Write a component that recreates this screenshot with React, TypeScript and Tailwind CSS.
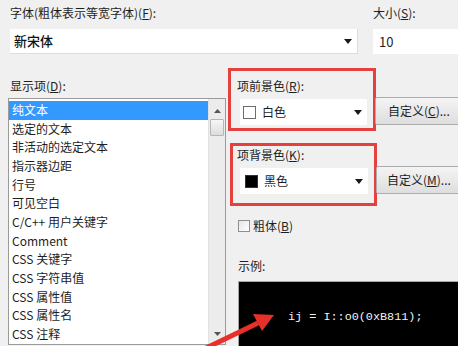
import React from "react";

const Arrow = ({ className = "" }: { className?: string }) => (
  <svg width="8" height="5" viewBox="0 0 8 5" className={className}>
    <polygon points="0,0 8,0 4,5" fill="#1a1a1a" />
  </svg>
);

const items = [
  "纯文本",
  "选定的文本",
  "非活动的选定文本",
  "指示器边距",
  "行号",
  "可见空白",
  "C/C++ 用户关键字",
  "Comment",
  "CSS 关键字",
  "CSS 字符串值",
  "CSS 属性值",
  "CSS 属性名",
  "CSS 注释",
];

export default function App() {
  return (
    <div
      className="relative w-[458px] h-[346px] overflow-hidden bg-[#f0f0f0] text-[12px] text-[#1e1e1e]"
      style={{ fontFamily: '"Noto Sans CJK SC", "Noto Sans", sans-serif' }}
    >
      {/* Top row */}
      <div className="flex pl-[10px] pt-[4px]">
        <div className="flex flex-col w-[348px] shrink-0">
          <div className="h-[18px] leading-[18px]">
            字体(粗体表示等宽字体)(<span className="underline">F</span>):
          </div>
          <div className="mt-[7px] h-[25px] bg-white border-b border-r border-[#dcdcdc] flex items-center justify-between pl-[4px] pr-[5px]">
            <span className="text-[13px] font-medium text-[#111]">新宋体</span>
            <Arrow />
          </div>
        </div>
        <div className="flex flex-col ml-[15px] w-[100px] shrink-0">
          <div className="h-[18px] leading-[18px]">
            大小(<span className="underline">S</span>):
          </div>
          <div className="mt-[7px] h-[25px] bg-white flex items-center pl-[6px] text-[13px]">
            10
          </div>
        </div>
      </div>

      {/* Bottom section */}
      <div className="flex mt-[14px]">
        {/* Left column */}
        <div className="flex flex-col w-[228px] shrink-0 pl-[8px]">
          <div className="pt-[9px] h-[27px] leading-[18px] pl-[2px]">
            显示项(<span className="underline">D</span>):
          </div>
          <div className="mt-[3px] w-[218px] h-[247px] border border-[#9a9a9a] bg-white flex overflow-hidden">
            <div className="flex-1 pt-[2px] overflow-hidden">
              {items.map((t, i) => (
                <div
                  key={t}
                  className={
                    "h-[18.67px] leading-[18.67px] pl-[3px] whitespace-nowrap " +
                    (i === 0 ? "bg-[#3399ff] text-white" : "")
                  }
                >
                  {t}
                </div>
              ))}
            </div>
            <div className="w-[17px] bg-[#ececec] border-l border-[#e2e2e2] flex flex-col items-center">
              <svg width="7" height="4" viewBox="0 0 7 4" className="mt-[10px]">
                <polygon points="0,4 7,4 3.5,0" fill="#555" />
              </svg>
              <div className="mt-[6px] w-[14px] h-[17px] bg-gradient-to-b from-[#f7f7f7] to-[#dcdcdc] border border-[#b5b5b5] rounded-[1px]" />
              <svg width="7" height="4" viewBox="0 0 7 4" className="mt-[196px]">
                <polygon points="0,0 7,0 3.5,4" fill="#555" />
              </svg>
            </div>
          </div>
        </div>

        {/* Right column */}
        <div className="flex flex-col w-[240px] shrink-0">
          {/* Foreground */}
          <div className="flex items-start">
            <div className="w-[148px] h-[63px] border-[3px] border-[#e4403d] flex flex-col shrink-0">
              <div className="pt-[6px] h-[24px] leading-[18px] pl-[6px]">
                项前景色(<span className="underline">R</span>):
              </div>
              <div className="mt-[4px] ml-[9px] w-[127px] h-[26px] bg-white flex items-center pl-[3px] pr-[5px]">
                <div className="w-[13px] h-[13px] bg-white border border-[#6d6d6d]" />
                <span className="ml-[6px] flex-1">白色</span>
                <Arrow />
              </div>
            </div>
            <div className="-ml-[1px] mt-[29px] w-[90px] h-[28px] border border-[#acacac] rounded-[2px] bg-gradient-to-b from-[#f4f4f4] to-[#dedede] flex items-center pl-[12px] whitespace-nowrap">
              自定义(<span className="underline">C</span>)...
            </div>
          </div>

          {/* Background */}
          <div className="flex items-start mt-[12px] pl-[2px]">
            <div className="w-[147px] h-[63px] border-[3px] border-[#e4403d] flex flex-col shrink-0">
              <div className="pt-[0px] h-[22px] leading-[18px] pl-[4px]">
                项背景色(<span className="underline">K</span>):
              </div>
              <div className="mt-[0px] ml-[7px] w-[128px] h-[26px] bg-white flex items-center pl-[5px] pr-[5px]">
                <div className="w-[13px] h-[13px] bg-black border border-[#333]" />
                <span className="ml-[6px] flex-1">黑色</span>
                <Arrow />
              </div>
            </div>
            <div className="-ml-[1px] mt-[23px] w-[90px] h-[28px] border border-[#acacac] rounded-[2px] bg-gradient-to-b from-[#f4f4f4] to-[#dedede] flex items-center pl-[10px] whitespace-nowrap">
              自定义(<span className="underline">M</span>)...
            </div>
          </div>

          {/* Bold checkbox */}
          <div className="flex items-center mt-[12px] pl-[10px] h-[16px]">
            <div className="w-[12px] h-[12px] border border-[#8f8f8f] bg-gradient-to-br from-[#e6e6e6] to-white" />
            <span className="ml-[3px]">
              粗体(<span className="underline">B</span>)
            </span>
          </div>

          <div className="mt-[23px] pl-[10px] h-[18px] leading-[18px]">示例:</div>

          <div className="mt-[6px] ml-[10px] h-[80px] bg-black border-t border-l border-[#a5a5a5] pl-[49px] pt-[24px]">
            <span
              className="text-[#f2f2f2] text-[11.8px] whitespace-nowrap"
              style={{ fontFamily: '"Liberation Mono", "DejaVu Sans Mono", monospace' }}
            >
              ij = I::o0(0xB811);
            </span>
          </div>
        </div>
      </div>

      {/* Red annotation arrow */}
      <svg
        className="absolute left-0 top-0 pointer-events-none"
        width="458"
        height="346"
        viewBox="0 0 458 346"
      >
        <line x1="198" y1="352" x2="258" y2="323" stroke="#e8302a" strokeWidth="5" />
        <polygon points="274,315 253,314 262,331" fill="#e8302a" />
      </svg>
    </div>
  );
}
